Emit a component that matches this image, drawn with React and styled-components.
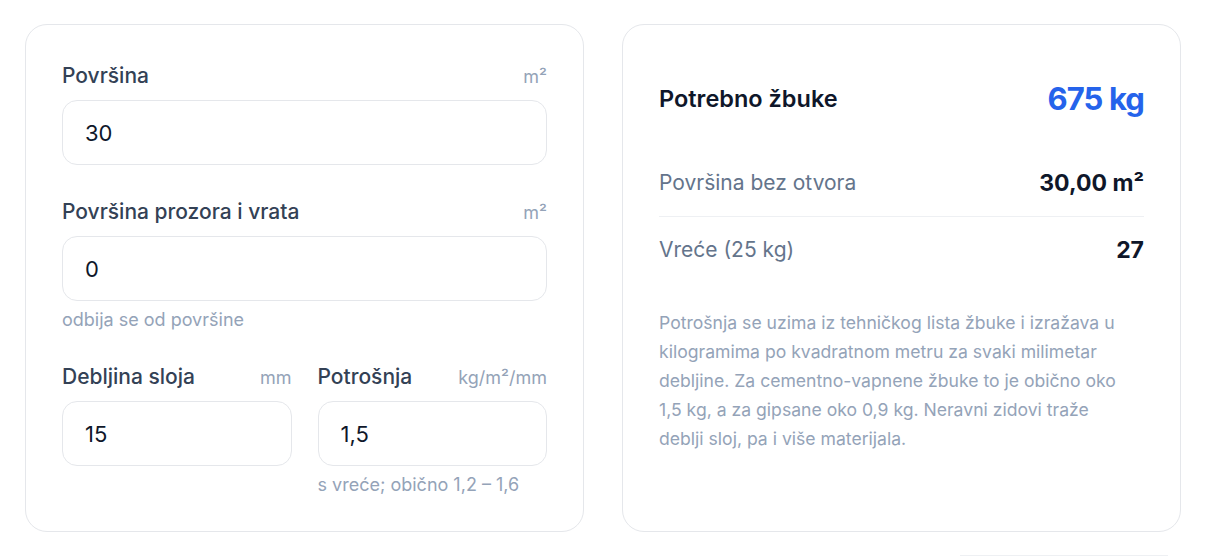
import React from "react"
import styled, { createGlobalStyle } from "styled-components"

const GlobalStyle = createGlobalStyle`
  * { box-sizing: border-box; }
  body {
    margin: 0;
    background: #ffffff;
    font-family: Inter, "Noto Sans", sans-serif;
    -webkit-font-smoothing: antialiased;
  }
`

const Page = styled.div`
  padding: 24px 25px 0;
  display: grid;
  grid-template-columns: 1fr 1fr;
  gap: 38px;
`

const Card = styled.div`
  background: #ffffff;
  border: 1px solid #e5e7eb;
  border-radius: 22px;
  padding: 36px;
  display: flex;
  flex-direction: column;
  gap: ${props => props.gap || 0}px;
`

const Field = styled.div`
  display: flex;
  flex-direction: column;
  min-width: 0;
`

const FieldRow = styled.div`
  display: grid;
  grid-template-columns: 1fr 1fr;
  gap: 26px;
`

const LabelRow = styled.div`
  display: flex;
  justify-content: space-between;
  align-items: baseline;
  height: 30px;
  line-height: 30px;
  white-space: nowrap;
`

const Label = styled.label`
  font-size: 21px;
  font-weight: 500;
  color: #334155;
`

const Unit = styled.span`
  font-size: 18px;
  color: #94a3b8;
`

const Input = styled.input`
  margin-top: 9px;
  height: 65px;
  width: 100%;
  border: 1px solid #e5e7eb;
  border-radius: 15px;
  padding: 0 22px;
  font-family: Inter, "Noto Sans", sans-serif;
  font-size: 22px;
  color: #0f172a;
  background: #ffffff;
  outline: none;
`

const Hint = styled.div`
  margin-top: 9px;
  font-size: 18px;
  line-height: 20px;
  color: #94a3b8;
  white-space: nowrap;
`

const Header = styled.div`
  height: 74px;
  display: flex;
  align-items: center;
  justify-content: space-between;
`

const Title = styled.div`
  font-size: 23.5px;
  font-weight: 600;
  color: #0f172a;
`

const Total = styled.div`
  font-size: 31px;
  font-weight: 700;
  letter-spacing: -0.9px;
  color: #2563eb;
`

const Rows = styled.div`
  margin-top: 15px;
`

const Row = styled.div`
  display: flex;
  justify-content: space-between;
  align-items: center;
  padding: 16px 0;
  line-height: 34px;
  & + & {
    border-top: 1px solid #eef0f3;
  }
`

const RowLabel = styled.span`
  font-size: 21px;
  color: #64748b;
`

const RowValue = styled.span`
  font-size: 23px;
  font-weight: 700;
  color: #0f172a;
`

const Note = styled.p`
  margin: 25px 0 0;
  font-size: 17.6px;
  line-height: 29px;
  color: #94a3b8;
  white-space: nowrap;
`

const Footer = styled.div`
  display: flex;
  justify-content: flex-end;
  padding: 23px 38px 0 0;
`

const FooterBox = styled.div`
  width: 208px;
  height: 10px;
  border-top: 1px solid #eef0f3;
`

const NumberField = ({ label, unit, value, hint }) => (
  <Field>
    <LabelRow>
      <Label>{label}</Label>
      <Unit>{unit}</Unit>
    </LabelRow>
    <Input defaultValue={value} inputMode="decimal" />
    {hint ? <Hint>{hint}</Hint> : null}
  </Field>
)

export default function App() {
  return (
    <>
      <GlobalStyle />
      <Page>
        <Card gap={32}>
          <NumberField label="Površina" unit="m²" value="30" />
          <NumberField
            label="Površina prozora i vrata"
            unit="m²"
            value="0"
            hint="odbija se od površine"
          />
          <FieldRow>
            <NumberField label="Debljina sloja" unit="mm" value="15" />
            <NumberField
              label="Potrošnja"
              unit="kg/m²/mm"
              value="1,5"
              hint="s vreće; obično 1,2 – 1,6"
            />
          </FieldRow>
        </Card>
        <Card>
          <Header>
            <Title>Potrebno žbuke</Title>
            <Total>675 kg</Total>
          </Header>
          <Rows>
            <Row>
              <RowLabel>Površina bez otvora</RowLabel>
              <RowValue>30,00 m²</RowValue>
            </Row>
            <Row>
              <RowLabel>Vreće (25 kg)</RowLabel>
              <RowValue>27</RowValue>
            </Row>
          </Rows>
          <Note>
            Potrošnja se uzima iz tehničkog lista žbuke i izražava u
            <br />
            kilogramima po kvadratnom metru za svaki milimetar
            <br />
            debljine. Za cementno-vapnene žbuke to je obično oko
            <br />
            1,5 kg, a za gipsane oko 0,9 kg. Neravni zidovi traže
            <br />
            deblji sloj, pa i više materijala.
          </Note>
        </Card>
      </Page>
      <Footer>
        <FooterBox />
      </Footer>
    </>
  )
}
